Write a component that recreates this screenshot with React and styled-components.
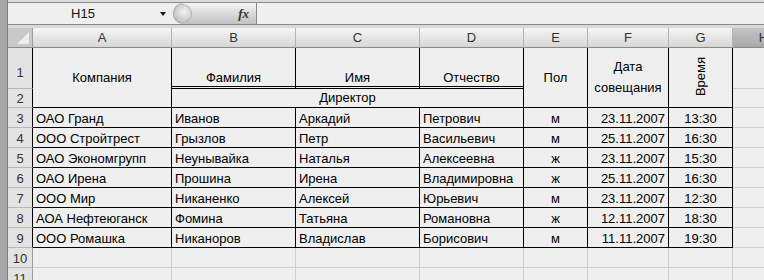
import React from "react";
import styled, { createGlobalStyle } from "styled-components";

const GlobalStyle = createGlobalStyle`
  html, body {
    margin: 0;
    padding: 0;
  }
  body {
    width: 764px;
    height: 280px;
    overflow: hidden;
    background: #a6a6a6;
    font-family: "Liberation Sans", Arial, sans-serif;
  }
`;

const Window = styled.div`
  display: flex;
  width: 764px;
  height: 280px;
  overflow: hidden;
`;

const Frame = styled.div`
  flex: none;
  width: 7px;
  background: #a6a6a6;
  border-right: 1px solid #7b7b7b;
`;

const Content = styled.div`
  flex: 1;
  min-width: 0;
  display: flex;
  flex-direction: column;
  padding-top: 2px;
  background: #dadada;
  overflow: hidden;
`;

const FormulaBar = styled.div`
  flex: none;
  display: flex;
  align-items: stretch;
  height: 23px;
  box-sizing: border-box;
  margin-bottom: 3px;
  border-top: 1px solid #8a8a8a;
  border-bottom: 1px solid #8a8a8a;
  background: #efefef;
`;

const NameBox = styled.div`
  width: 150px;
  display: flex;
  align-items: center;
  justify-content: center;
  font-size: 13px;
  color: #111;
`;

const Arrow = styled.div`
  width: 0;
  height: 0;
  align-self: center;
  margin: 1px 0 0 2px;
  border-left: 3px solid transparent;
  border-right: 3px solid transparent;
  border-top: 4px solid #111;
`;

const FxButton = styled.div`
  width: 84px;
  margin-left: 7px;
  display: flex;
  align-items: center;
  justify-content: space-between;
  box-sizing: border-box;
  padding: 0 7px 0 1px;
  border-radius: 11px 0 0 11px;
  border-right: 1px solid #8a8a8a;
  background: linear-gradient(#f4f4f4, #dcdcdc 45%, #c2c2c2);
  box-shadow: inset 1px 0 0 #9a9a9a;
`;

const Knob = styled.div`
  width: 17px;
  height: 17px;
  border-radius: 50%;
  background: radial-gradient(circle at 60% 40%, #f2f2f2, #c6c6c6 70%, #a8a8a8);
  box-shadow: 0 0 0 1px #b2b2b2;
`;

const Fx = styled.span`
  font-family: "Liberation Serif", "Times New Roman", serif;
  font-style: italic;
  font-weight: bold;
  font-size: 13px;
  color: #333;
`;

const FormulaInput = styled.div`
  flex: 1;
  background: #efefef;
`;

const Sheet = styled.div`
  flex: none;
  display: grid;
  grid-template-columns: 25px 139px 124px 124px 104px 64px 81px 64px 62px;
  grid-template-rows: 20px 41px 19px repeat(9, 20px);
  background: #efefef;
  font-size: 13px;
`;

const Corner = styled.div`
  grid-column: 1;
  grid-row: 1;
  box-sizing: border-box;
  border-right: 1px solid #9c9c9c;
  border-bottom: 1px solid #8a8a8a;
  background: #c9c9c9;
  position: relative;
  &::after {
    content: "";
    position: absolute;
    right: 3px;
    bottom: 3px;
    width: 0;
    height: 0;
    border-left: 12px solid transparent;
    border-bottom: 12px solid #ececec;
  }
`;

const ColHead = styled.div`
  grid-row: 1;
  display: flex;
  align-items: center;
  justify-content: center;
  box-sizing: border-box;
  color: #333;
  border-right: 1px solid ${(p) => (p.$selected ? "#8e8e8e" : "#b4b4b4")};
  border-bottom: 1px solid #8a8a8a;
  background: ${(p) =>
    p.$selected
      ? "linear-gradient(#c4c4c4, #a9a9a9)"
      : "linear-gradient(#f6f6f6, #e6e6e6 50%, #d6d6d6)"};
`;

const RowHead = styled.div`
  grid-column: 1;
  grid-row: ${(p) => p.$row};
  display: flex;
  align-items: flex-end;
  justify-content: center;
  padding-bottom: ${(p) => (p.$tall ? 8 : 1)}px;
  box-sizing: border-box;
  color: #333;
  background: #e3e3e3;
  border-right: 1px solid ${(p) => (p.$inTable ? "#000" : "#9c9c9c")};
  border-bottom: 1px solid #b8b8b8;
`;

const gridLine = (p) => (p.$table ? "#000" : "#cfcfcf");

const Cell = styled.div`
  grid-column: ${(p) => p.$col} / span ${(p) => p.$span || 1};
  grid-row: ${(p) => p.$row} / span ${(p) => p.$rows || 1};
  min-width: 0;
  overflow: hidden;
  white-space: nowrap;
  display: flex;
  flex-direction: column;
  justify-content: ${(p) => p.$valign || "flex-end"};
  align-items: ${(p) => p.$align || "flex-start"};
  text-align: center;
  box-sizing: border-box;
  padding: 0 3px 1px;
  color: #000;
  line-height: 15px;
  border-right: 1px solid ${gridLine};
  border-bottom: ${(p) =>
    p.$double ? "3px double #000" : `1px solid ${gridLine(p)}`};
`;

const TwoLines = styled.span`
  line-height: 21px;
`;

const Rotated = styled.span`
  writing-mode: vertical-rl;
  transform: rotate(180deg);
`;

const columns = ["A", "B", "C", "D", "E", "F", "G", "H"];

const rows = [
  ["ОАО Гранд", "Иванов", "Аркадий", "Петрович", "м", "23.11.2007", "13:30"],
  ["ООО Стройтрест", "Грызлов", "Петр", "Васильевич", "м", "25.11.2007", "16:30"],
  ["ОАО Экономгрупп", "Неунывайка", "Наталья", "Алексеевна", "ж", "23.11.2007", "15:30"],
  ["ОАО Ирена", "Прошина", "Ирена", "Владимировна", "ж", "25.11.2007", "16:30"],
  ["ООО Мир", "Никаненко", "Алексей", "Юрьевич", "м", "23.11.2007", "12:30"],
  ["АОА Нефтеюганск", "Фомина", "Татьяна", "Романовна", "ж", "12.11.2007", "18:30"],
  ["ООО Ромашка", "Никаноров", "Владислав", "Борисович", "м", "11.11.2007", "19:30"],
];

// horizontal alignment per column A..G
const aligns = ["flex-start", "flex-start", "flex-start", "flex-start", "center", "flex-end", "center"];

const App = () => {
  return (
    <>
      <GlobalStyle />
      <Window>
        <Frame />
        <Content>
          <FormulaBar>
            <NameBox>H15</NameBox>
            <Arrow />
            <FxButton>
              <Knob />
              <Fx>fx</Fx>
            </FxButton>
            <FormulaInput />
          </FormulaBar>

          <Sheet>
            <Corner />
            {columns.map((c) => (
              <ColHead key={c} $selected={c === "H"}>
                {c}
              </ColHead>
            ))}

            {Array.from({ length: 11 }, (_, i) => (
              <RowHead key={i} $row={i + 2} $inTable={i < 9} $tall={i === 0}>
                {i + 1}
              </RowHead>
            ))}

            {/* header block, rows 1-2 */}
            <Cell $col={2} $row={2} $rows={2} $table $valign="center" $align="center">
              Компания
            </Cell>
            <Cell $col={3} $row={2} $table $double $align="center">
              Фамилия
            </Cell>
            <Cell $col={4} $row={2} $table $double $align="center">
              Имя
            </Cell>
            <Cell $col={5} $row={2} $table $double $align="center">
              Отчество
            </Cell>
            <Cell $col={3} $row={3} $span={3} $table $valign="center" $align="center">
              Директор
            </Cell>
            <Cell $col={6} $row={2} $rows={2} $table $valign="center" $align="center">
              Пол
            </Cell>
            <Cell $col={7} $row={2} $rows={2} $table $valign="center" $align="center">
              <TwoLines>
                Дата
                <br />
                совещания
              </TwoLines>
            </Cell>
            <Cell $col={8} $row={2} $rows={2} $table $valign="center" $align="center">
              <Rotated>Время</Rotated>
            </Cell>
            <Cell $col={9} $row={2} />
            <Cell $col={9} $row={3} />

            {rows.map((r, ri) => (
              <React.Fragment key={ri}>
                {r.map((v, ci) => (
                  <Cell key={ci} $col={ci + 2} $row={ri + 4} $table $align={aligns[ci]}>
                    {v}
                  </Cell>
                ))}
                <Cell $col={9} $row={ri + 4} />
              </React.Fragment>
            ))}

            {[11, 12].map((gr) =>
              columns.map((c, ci) => <Cell key={gr + c} $col={ci + 2} $row={gr} />)
            )}
          </Sheet>
        </Content>
      </Window>
    </>
  );
};

export default App;
